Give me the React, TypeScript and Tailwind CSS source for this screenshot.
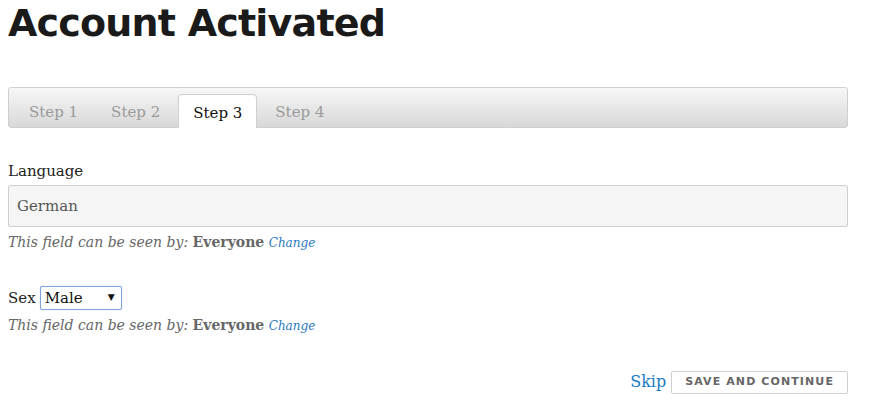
export default function App() {
  const serif = "font-['DejaVu_Serif',serif]";
  const steps = ["Step 1", "Step 2", "Step 3", "Step 4"];

  const Visibility = () => (
    <p className="mt-[6px] text-[14px] leading-[18px] text-[#666]">
      <span className="italic">This field can be seen by: </span>
      <span className="font-bold">Everyone</span>{" "}
      <a href="#" className="text-[12px] italic text-[#2a78c2]">
        Change
      </a>
    </p>
  );

  return (
    <div className={`ml-2 w-[840px] bg-white ${serif} text-[#222]`}>
      {/* Heading */}
      <h1 className="font-['DejaVu_Sans',sans-serif] text-[38px] font-bold leading-[46px] tracking-[-0.8px] text-[#1a1a1a]">
        Account Activated
      </h1>

      {/* Step tabs */}
      <div className="mt-[41px] flex h-[41px] items-end gap-[3px] rounded-[3px] border border-[#cfcfcf] bg-gradient-to-b from-[#f7f7f7] to-[#d8d8d8] pl-[5px]">
        {steps.map((s, i) =>
          i === 2 ? (
            <div
              key={s}
              className="-mb-px flex h-[34px] items-center rounded-t-[4px] border border-b-0 border-[#d0d0d0] bg-white px-[14px] pt-[4px] text-[15px] text-[#111]"
            >
              {s}
            </div>
          ) : (
            <div
              key={s}
              className="flex h-[33px] items-center px-[15px] pt-[4px] text-[15px] text-[#9a9a9a]"
            >
              {s}
            </div>
          )
        )}
      </div>

      {/* Language */}
      <div className="mt-[32px]">
        <label className="block text-[15px] leading-[22px] text-[#222]">
          Language
        </label>
        <div className="mt-[3px] flex h-[42px] items-center rounded-[2px] border border-[#cfcfcf] bg-[#f5f5f5] px-[8px] text-[15px] text-[#555]">
          German
        </div>
        <Visibility />
      </div>

      {/* Sex */}
      <div className="mt-[34px]">
        <div className="flex items-center gap-[4px] text-[15px]">
          <span>Sex</span>
          <div className="flex h-[24px] w-[82px] items-center justify-between rounded-[2px] border border-[#7ea3dd] bg-white pl-[4px] pr-[6px] shadow-[0_0_1px_#9bb8e8] text-[#111]">
            <span>Male</span>
            <span className="font-['DejaVu_Sans',sans-serif] text-[9px]">▼</span>
          </div>
        </div>
        <Visibility />
      </div>

      {/* Actions */}
      <div className="mt-[35px] flex items-center justify-end gap-[5px]">
        <a href="#" className="text-[16px] text-[#1a7ac2]">
          Skip
        </a>
        <button className="flex h-[23px] items-center rounded-[2px] border border-[#cfcfcf] bg-white px-[13px] font-['DejaVu_Sans',sans-serif] text-[11px] font-bold tracking-[1.1px] text-[#666]">
          SAVE AND CONTINUE
        </button>
      </div>
    </div>
  );
}
